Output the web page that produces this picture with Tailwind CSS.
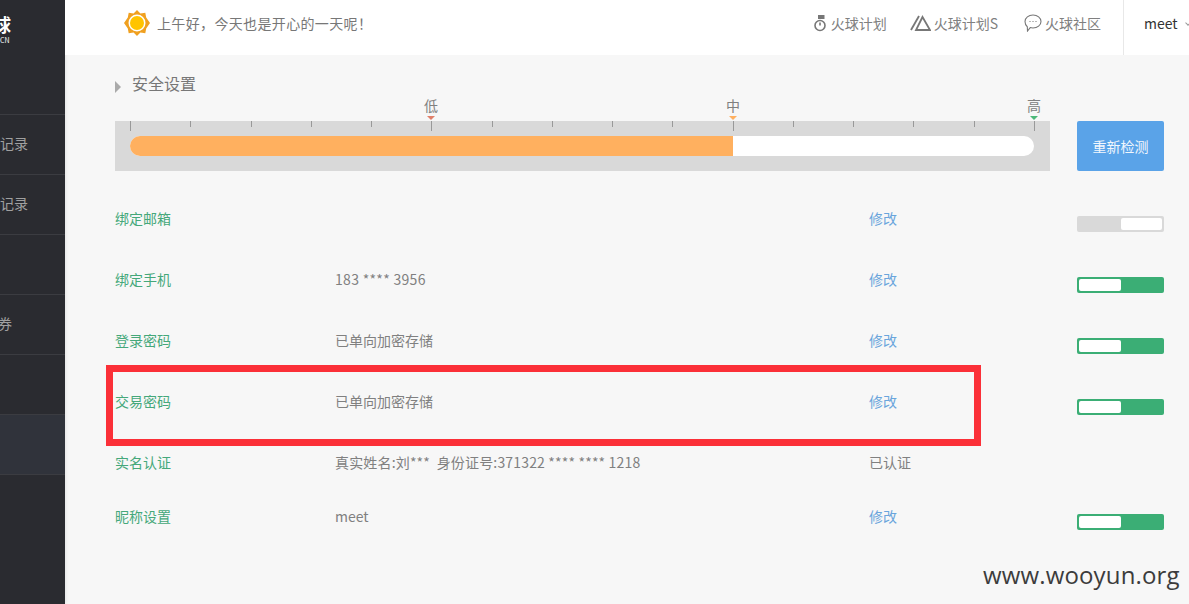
<!DOCTYPE html>
<html lang="zh-CN">
<head>
  <meta charset="UTF-8" />
  <title>安全设置</title>
  <script src="https://cdn.jsdelivr.net/npm/@tailwindcss/browser@4"></script>
</head>
<body class="relative flex h-[604px] w-[1189px] overflow-hidden bg-[#f7f7f7] font-['Noto_Sans_CJK_SC','Liberation_Sans',sans-serif] text-sm text-[#808080]">

  <!-- sidebar, cut off by the window on the left -->
  <aside class="h-full w-[65px] shrink-0 overflow-hidden bg-[#2a2b30] text-[#a0a0a0] shadow-[1px_0_3px_rgba(0,0,0,0.08)]">
    <div class="h-[115px] border-b border-[#3b3c41] pt-[12px]">
      <div class="-ml-[7px] text-[18px] font-bold leading-[24px] text-white">球</div>
      <div class="text-[7px] leading-[8px] text-white">CN</div>
    </div>
    <div class="flex h-[60px] items-center border-b border-[#3b3c41] pb-[3px]">记录</div>
    <div class="flex h-[60px] items-center border-b border-[#3b3c41] pb-[3px]">记录</div>
    <div class="h-[60px] border-b border-[#3b3c41]"></div>
    <div class="flex h-[60px] items-center border-b border-[#3b3c41] -ml-[2px] pb-[3px]">券</div>
    <div class="h-[60px] border-b border-[#3b3c41]"></div>
    <div class="h-[60px] border-b border-[#3b3c41] bg-[#30333b]"></div>
  </aside>

  <main class="min-w-0 flex-1">
    <header class="flex h-[55px] items-center bg-white pl-[59px]">
      <div class="flex h-full items-center pb-[9px]">
        <svg class="h-[26px] w-[26px]" viewBox="0 0 26 26">
          <path fill="#f0a020" d="M13 0l3.400 3.600 4.900-.9.9 4.900L26 13l-3.800 5.400-.9 4.900-4.900-.9L13 26l-3.400-3.600-4.900.9-.9-4.900L0 13l3.800-5.400.9-4.900 4.900.9z" />
          <circle cx="13" cy="13" r="8.500" fill="#fff" />
          <circle cx="13" cy="13" r="7" fill="#ffc400" />
        </svg>
        <span class="ml-[7px] tracking-[0.35px] text-[#777]">上午好，今天也是开心的一天呢！</span>
      </div>
      <nav class="ml-auto flex h-full items-center pb-[9px] text-[#808080]">
        <svg class="h-[18px] w-[12px]" viewBox="0 0 12 18" fill="none" stroke="#777" stroke-width="1.600">
          <circle cx="6" cy="11.500" r="5" />
          <path d="M6 8.500v3" />
          <path d="M4 1h6.500v4H4z" fill="#777" stroke="none" />
        </svg>
        <span class="ml-[5px]">火球计划</span>
        <svg class="ml-[23px] h-[18px] w-[21px]" viewBox="0 0 21 18" fill="none" stroke="#777" stroke-width="1.800">
          <path d="M1 16L9 2" />
          <path d="M12.500 3l7.500 13H6z" />
        </svg>
        <span class="ml-[3px]">火球计划S</span>
        <svg class="ml-[26px] h-[18px] w-[18px]" viewBox="0 0 18 18" fill="none" stroke="#777" stroke-width="1.100">
          <path d="M9 1c4.400 0 8 2.800 8 6.500S13.400 14 9 14c-1 0-2-.1-2.800-.4L3.500 17l-.2-4.300C1.800 11.500 1 9.600 1 7.500 1 3.800 4.600 1 9 1z" />
          <path d="M5.500 7.500h1M8.500 7.500h1M11.500 7.500h1" />
        </svg>
        <span class="ml-[3px]">火球社区</span>
      </nav>
      <div class="ml-[22px] flex h-full w-[66px] items-center border-l border-[#e8e8e8] pb-[9px] pl-[20px] text-[#333]">
        <span>meet</span>
        <span class="ml-[8px] h-[4px] w-[4px] shrink-0 rotate-45 border-r border-b border-[#999]"></span>
      </div>
    </header>

    <section class="pl-[50px] pr-[25px]">
      <div class="flex h-[33px] items-center pt-[25px] text-base leading-[22px] text-[#777]">
        <span class="mt-[6px] h-0 w-0 border-y-[6px] border-l-[6px] border-y-transparent border-l-[#aaa]"></span>
        <span class="-mt-[2px] ml-[11px]">安全设置</span>
      </div>

      <div class="flex gap-[27px] pt-[33px]">
        <!-- gauge -->
        <div class="relative h-[50px] w-[935px] bg-[#d9d9d9]">
          <div class="absolute -top-[25px] left-[316px] flex w-0 flex-col items-center">
            <span class="leading-[18px]">低</span>
            <span class="mt-[2px] h-0 w-0 border-x-[4px] border-t-[4px] border-x-transparent border-t-[#e0806a]"></span>
          </div>
          <div class="absolute -top-[25px] left-[618px] flex w-0 flex-col items-center">
            <span class="leading-[18px]">中</span>
            <span class="mt-[2px] h-0 w-0 border-x-[4px] border-t-[4px] border-x-transparent border-t-[#ffb060]"></span>
          </div>
          <div class="absolute -top-[25px] left-[919px] flex w-0 flex-col items-center">
            <span class="leading-[18px]">高</span>
            <span class="mt-[2px] h-0 w-0 border-x-[4px] border-t-[4px] border-x-transparent border-t-[#4cb878]"></span>
          </div>
          <div class="ml-[15px] flex h-[15px] w-[905px] items-start justify-between">
            <i class="h-[10px] w-px bg-[#999]"></i><i class="h-[6px] w-px bg-[#999]"></i><i class="h-[6px] w-px bg-[#999]"></i><i class="h-[6px] w-px bg-[#999]"></i><i class="h-[6px] w-px bg-[#999]"></i>
            <i class="h-[10px] w-px bg-[#999]"></i><i class="h-[6px] w-px bg-[#999]"></i><i class="h-[6px] w-px bg-[#999]"></i><i class="h-[6px] w-px bg-[#999]"></i><i class="h-[6px] w-px bg-[#999]"></i>
            <i class="h-[10px] w-px bg-[#999]"></i><i class="h-[6px] w-px bg-[#999]"></i><i class="h-[6px] w-px bg-[#999]"></i><i class="h-[6px] w-px bg-[#999]"></i><i class="h-[6px] w-px bg-[#999]"></i>
            <i class="h-[10px] w-px bg-[#999]"></i>
          </div>
          <div class="ml-[15px] h-[20px] w-[904px] overflow-hidden rounded-full bg-white">
            <div class="h-full w-[603px] bg-[#ffb05f]"></div>
          </div>
        </div>
        <button class="h-[50px] w-[87px] rounded-[2px] bg-[#5aa3e8] text-[#f2f7fd]">重新检测</button>
      </div>

      <div class="pt-[18px]">
        <div class="flex h-[61px] items-start">
          <div class="mt-[18px] w-[220px] leading-[22px] text-[#45a87a]">绑定邮箱</div>
          <div class="mt-[18px] w-[535px] leading-[22px]"></div>
          <div class="mt-[18px] w-[207px] -translate-x-px leading-[22px] text-[#6aa5dc]">修改</div>
          <div class="mt-[27px] flex h-[16px] w-[87px] rounded-[2px] bg-[#d9d9d9] p-[2px] pl-[44px]"><div class="h-full w-full rounded-[2px] bg-white"></div></div>
        </div>
        <div class="flex h-[61px] items-start">
          <div class="mt-[18px] w-[220px] leading-[22px] text-[#45a87a]">绑定手机</div>
          <div class="mt-[18px] w-[535px] leading-[22px] tracking-[0.3px]">183 **** 3956</div>
          <div class="mt-[18px] w-[207px] -translate-x-px leading-[22px] text-[#6aa5dc]">修改</div>
          <div class="mt-[27px] flex h-[16px] w-[87px] rounded-[2px] bg-[#3bae75] p-[2px] pr-[43px]"><div class="h-full w-full rounded-[2px] bg-white"></div></div>
        </div>
        <div class="flex h-[61px] items-start">
          <div class="mt-[18px] w-[220px] leading-[22px] text-[#45a87a]">登录密码</div>
          <div class="mt-[18px] w-[535px] leading-[22px]">已单向加密存储</div>
          <div class="mt-[18px] w-[207px] -translate-x-px leading-[22px] text-[#6aa5dc]">修改</div>
          <div class="mt-[27px] flex h-[16px] w-[87px] rounded-[2px] bg-[#3bae75] p-[2px] pr-[43px]"><div class="h-full w-full rounded-[2px] bg-white"></div></div>
        </div>
        <div class="flex h-[61px] items-start">
          <div class="mt-[18px] w-[220px] leading-[22px] text-[#45a87a]">交易密码</div>
          <div class="mt-[18px] w-[535px] leading-[22px]">已单向加密存储</div>
          <div class="mt-[18px] w-[207px] -translate-x-px leading-[22px] text-[#6aa5dc]">修改</div>
          <div class="mt-[27px] flex h-[16px] w-[87px] rounded-[2px] bg-[#3bae75] p-[2px] pr-[43px]"><div class="h-full w-full rounded-[2px] bg-white"></div></div>
        </div>
        <div class="flex h-[54px] items-start">
          <div class="mt-[18px] w-[220px] leading-[22px] text-[#45a87a]">实名认证</div>
          <div class="mt-[18px] w-[535px] leading-[22px] tracking-[0.17px]">真实姓名:刘***&nbsp;&nbsp;身份证号:371322 **** **** 1218</div>
          <div class="mt-[18px] w-[207px] -translate-x-px leading-[22px]">已认证</div>
        </div>
        <div class="flex h-[61px] items-start">
          <div class="mt-[18px] w-[220px] leading-[22px] text-[#45a87a]">昵称设置</div>
          <div class="mt-[18px] w-[535px] leading-[22px]">meet</div>
          <div class="mt-[18px] w-[207px] -translate-x-px leading-[22px] text-[#6aa5dc]">修改</div>
          <div class="mt-[27px] flex h-[16px] w-[87px] rounded-[2px] bg-[#3bae75] p-[2px] pr-[43px]"><div class="h-full w-full rounded-[2px] bg-white"></div></div>
        </div>
      </div>
    </section>
  </main>

  <!-- red annotation and watermark lie over the page -->
  <div class="absolute left-[106px] top-[365px] h-[81px] w-[875px] border-[7px] border-[#fb3038]"></div>
  <div class="absolute left-[983px] top-[559px] font-['Open_Sans','Liberation_Sans',sans-serif] text-[24px] leading-[32px] tracking-[0.15px] text-[#3c3c3c]">www.wooyun.org</div>
</body>
</html>
